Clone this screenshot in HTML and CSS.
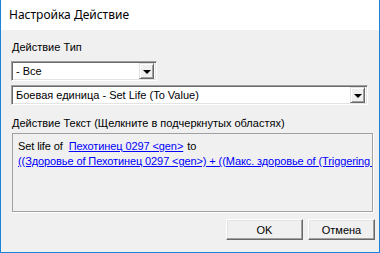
FILE: index.html
```html
<!DOCTYPE html>
<html>
<head>
  <meta charset="utf-8">
  <link rel="stylesheet" href="styles.css">
</head>
<body>
  <div class="window">
    <div class="titlebar">Настройка Действие</div>

    <div class="content">
      <div class="field-label">Действие Тип</div>
      <div class="combo combo-small">
        <span class="combo-text">- Все</span>
        <span class="combo-button"><span class="arrow"></span></span>
      </div>
      <div class="combo combo-wide">
        <span class="combo-text">Боевая единица - Set Life (To Value)</span>
        <span class="combo-button"><span class="arrow"></span></span>
      </div>

      <div class="field-label label-text">Действие Текст (Щелкните в подчеркнутых областях)</div>
      <div class="action-text">
        <div class="line">Set life of <a class="link link-gap">Пехотинец 0297 &lt;gen&gt;</a> to</div>
        <div class="line"><a class="link">((Здоровье of Пехотинец 0297 &lt;gen&gt;) + ((Макс. здоровье of (Triggering unit)) x 0.10))</a></div>
      </div>

      <div class="buttons">
        <button class="dlg-button btn-ok">OK</button>
        <button class="dlg-button btn-cancel">Отмена</button>
      </div>
    </div>
  </div>
</body>
</html>
```

FILE: styles.css
```css
body {
  margin: 0;
  font-family: 'Liberation Sans', Arial, sans-serif;
  font-size: 11px;
  color: #000;
}

.window {
  width: 378px;
  height: 252px;
  border: 1px solid #1883d7;
  border-top: none;
  background: #f0f0f0;
  display: flex;
  flex-direction: column;
}

.titlebar {
  height: 30px;
  background: #fff;
  font-family: 'Noto Sans', 'Open Sans', sans-serif;
  font-size: 12px;
  line-height: 30px;
  padding-left: 8px;
  color: #000;
}

.content {
  padding: 10px 7px 0 10px;
  display: flex;
  flex-direction: column;
}

.field-label {
  height: 14px;
  line-height: 14px;
  margin-bottom: 7px;
  padding-left: 1px;
}

.label-text {
  margin-top: 11px;
  margin-bottom: 3px;
}

.combo {
  height: 20px;
  box-sizing: border-box;
  background: #fff;
  border: 1px solid;
  border-color: #a0a0a0 #fff #fff #a0a0a0;
  box-shadow: inset 1px 1px 0 #696969, inset -1px -1px 0 #e3e3e3;
  display: flex;
  align-items: center;
  padding: 2px;
}

.combo-small {
  width: 146px;
}

.combo-wide {
  width: 357px;
  margin-top: 4px;
}

.combo-text {
  flex: 1;
  padding-left: 2px;
  white-space: nowrap;
  overflow: hidden;
}

.combo-button {
  width: 15px;
  height: 16px;
  box-sizing: border-box;
  background: #f0f0f0;
  border: 1px solid;
  border-color: #e3e3e3 #696969 #696969 #e3e3e3;
  box-shadow: inset 1px 1px 0 #fff, inset -1px -1px 0 #a0a0a0;
  display: flex;
  align-items: center;
  justify-content: center;
}

.arrow {
  width: 0;
  height: 0;
  border-left: 4px solid transparent;
  border-right: 4px solid transparent;
  border-top: 4px solid #000;
  margin-top: 1px;
}

.action-text {
  width: 361px;
  height: 79px;
  box-sizing: border-box;
  border: 1px solid #a0a0a0;
  box-shadow: 1px 1px 0 #fff;
  padding: 5px 5px;
  overflow: hidden;
  margin-left: 1px;
}

.line {
  white-space: nowrap;
  line-height: 15px;
  letter-spacing: -0.1px;
}

.link {
  color: #0000ff;
  text-decoration: underline;
}

.link-gap {
  margin-left: 3px;
  margin-right: 1px;
}

.buttons {
  display: flex;
  justify-content: flex-end;
  gap: 5px;
  margin-top: 7px;
  margin-right: -3px;
}

.dlg-button {
  height: 21px;
  font-family: 'Liberation Sans', Arial, sans-serif;
  font-size: 11px;
  background: #f0f0f0;
  border: 1px solid;
  border-color: #fff #696969 #696969 #fff;
  box-shadow: inset -1px -1px 0 #a0a0a0, inset 1px 1px 0 #e3e3e3;
  padding: 0;
  color: #000;
}

.btn-ok {
  width: 77px;
}

.btn-cancel {
  width: 67px;
}
```
